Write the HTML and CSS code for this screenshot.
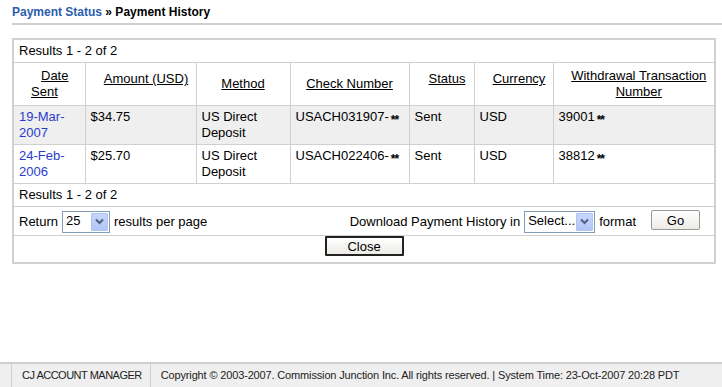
FILE: index.html
```html
<!DOCTYPE html>
<html lang="en">
<head>
    <meta charset="UTF-8">
    <title>Payment History</title>
    <link rel="stylesheet" href="styles.css">
</head>
<body>
    <div class="page">
        <h1 class="crumbs"><a href="#">Payment Status</a> &raquo; Payment History</h1>

        <table class="history">
            <colgroup>
                <col class="w-date">
                <col class="w-amount">
                <col class="w-method">
                <col class="w-check">
                <col class="w-status">
                <col class="w-cur">
                <col class="w-wtn">
            </colgroup>
            <tr>
                <td colspan="7" class="results">Results 1 - 2 of 2</td>
            </tr>
            <tr class="head">
                <th class="c-date"><a href="#"><span class="indent">Date</span><br>Sent</a></th>
                <th class="raised"><a href="#">Amount (USD)</a></th>
                <th><a href="#">Method</a></th>
                <th><a href="#">Check Number</a></th>
                <th class="raised"><a href="#">Status</a></th>
                <th class="raised"><a href="#">Currency</a></th>
                <th class="c-wtn"><a href="#">Withdrawal Transaction Number</a></th>
            </tr>
            <tr class="odd">
                <td><a href="#" class="date">19-Mar-2007</a></td>
                <td>$34.75</td>
                <td>US Direct Deposit</td>
                <td>USACH031907-<span class="stars">**</span></td>
                <td>Sent</td>
                <td>USD</td>
                <td>39001<span class="stars">**</span></td>
            </tr>
            <tr>
                <td><a href="#" class="date">24-Feb-2006</a></td>
                <td>$25.70</td>
                <td>US Direct Deposit</td>
                <td>USACH022406-<span class="stars">**</span></td>
                <td>Sent</td>
                <td>USD</td>
                <td>38812<span class="stars">**</span></td>
            </tr>
            <tr>
                <td colspan="7" class="results">Results 1 - 2 of 2</td>
            </tr>
            <tr>
                <td colspan="7" class="controls">
                    <div class="bar">
                        <div class="grp">
                            Return
                            <span class="select sel-num"><span class="val">25</span><span class="arrow"><svg width="9" height="7" viewBox="0 0 9 7"><path d="M1 1.5 L4.5 5 L8 1.5" fill="none" stroke="#4d6185" stroke-width="2"/></svg></span></span>
                            results per page
                        </div>
                        <div class="grp">
                            Download Payment History in
                            <span class="select sel-fmt"><span class="val">Select...</span><span class="arrow"><svg width="9" height="7" viewBox="0 0 9 7"><path d="M1 1.5 L4.5 5 L8 1.5" fill="none" stroke="#4d6185" stroke-width="2"/></svg></span></span>
                            format
                            <button class="btn go">Go</button>
                        </div>
                    </div>
                </td>
            </tr>
            <tr>
                <td colspan="7" class="closecell"><button class="btn close">Close</button></td>
            </tr>
        </table>
    </div>

    <div class="footer">
        <div class="f-edge"></div>
        <div class="f-name">CJ ACCOUNT MANAGER</div>
        <div class="f-copy">Copyright &copy; 2003-2007. Commission Junction Inc. All rights reserved. | System Time: 23-Oct-2007 20:28 PDT</div>
    </div>
</body>
</html>
```

FILE: styles.css
```css
:root {
    --line: #d0d0d0;
    --blue: #2a5db0;
    --link: #2b3bd0;
    --font: "Liberation Sans", Arial, sans-serif;
}

body {
    margin: 0;
    font-family: var(--font);
    font-size: 13px;
    color: #000;
    background: #fff;
}

.page {
    padding: 0 8px 0 12px;
    height: 362px;
    overflow: hidden;
}

.crumbs {
    margin: 0 -8px 0 0;
    padding: 5px 0 4px 0;
    font-size: 12px;
    line-height: 14px;
    font-weight: bold;
    border-bottom: 2px solid #cfcfcf;
}

.crumbs a {
    color: var(--blue);
    text-decoration: none;
}

.history {
    margin-top: 13px;
    width: 702px;
    table-layout: fixed;
    border-collapse: collapse;
    border: 2px solid var(--line);
}

.w-date { width: 72px; }
.w-amount { width: 111px; }
.w-method { width: 94px; }
.w-check { width: 119px; }
.w-status { width: 65px; }
.w-cur { width: 79px; }
.w-wtn { width: 162px; }

.history td,
.history th {
    border: 1px solid var(--line);
    text-align: left;
    vertical-align: top;
    padding: 3px 5px;
    line-height: 16px;
    font-weight: normal;
}

.history .head th {
    text-align: center;
    vertical-align: middle;
    padding: 5px 4px;
}

.history .head th.raised {
    vertical-align: top;
    padding: 8px 3px 0 14px;
}

.history .head th.c-date {
    text-align: left;
    padding-left: 17px;
}

.history .head th.c-wtn {
    padding: 5px 2px 5px 12px;
}

.indent {
    padding-left: 10px;
}

.head a {
    color: #000;
}

.history tr.odd td {
    background: #efefef;
}

.history tr td {
    height: 32px;
}

.history tr td.results {
    height: 16px;
    padding: 3px 5px;
}

.date {
    color: var(--link);
    text-decoration: none;
}

.stars {
    font-size: 12px;
    font-weight: bold;
    position: relative;
    top: 3px;
    padding-left: 2px;
    letter-spacing: -1px;
}

.history td.controls {
    height: 22px;
    padding: 3px 5px 2px 5px;
    vertical-align: middle;
}

.bar {
    display: flex;
    justify-content: space-between;
    align-items: center;
}

.grp {
    display: flex;
    align-items: center;
    gap: 4px;
}

.select {
    display: inline-flex;
    align-items: stretch;
    height: 22px;
    border: 1px solid #7f9db9;
    background: #fff;
    box-sizing: border-box;
}

.select .val {
    padding: 1px 0 0 3px;
    font-size: 13px;
    line-height: 16px;
    flex: 1;
}

.sel-num { width: 48px; }
.sel-fmt { width: 71px; }

.select .arrow {
    width: 15px;
    margin: 1px;
    display: flex;
    align-items: center;
    justify-content: center;
    background: linear-gradient(#c6d5fb, #b3c7f5);
    border: 1px solid #b0c4ef;
    border-radius: 1px;
}

.btn {
    font-family: var(--font);
    font-size: 13px;
    background: linear-gradient(#ffffff, #ecebe6);
    color: #000;
    padding: 0;
    cursor: pointer;
}

.go {
    width: 49px;
    height: 20px;
    border: 1px solid #999;
    border-radius: 2px;
    margin-left: 11px;
    margin-right: 9px;
    margin-bottom: 3px;
}

.history td.closecell {
    text-align: center;
    height: 21px;
    padding: 0 5px 5px 5px;
    vertical-align: top;
}

.close {
    width: 79px;
    height: 20px;
    border: 2px solid #222;
    border-radius: 1px;
}

.footer {
    display: flex;
    height: 23px;
    background: #efefef;
    border-top: 2px solid #cfcfcf;
    font-size: 11px;
    color: #222;
    line-height: 23px;
}

.f-edge {
    width: 11px;
    border-right: 1px solid #cfcfcf;
}

.f-name {
    padding: 0 8px 0 10px;
    border-right: 1px solid #cfcfcf;
    white-space: nowrap;
    letter-spacing: -0.5px;
}

.f-copy {
    padding-left: 10px;
    white-space: nowrap;
    letter-spacing: -0.15px;
}
```
